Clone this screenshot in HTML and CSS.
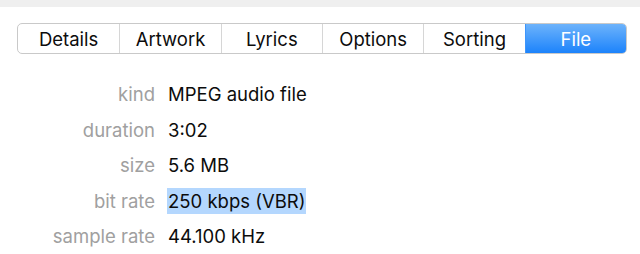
FILE: index.html
```html
<!DOCTYPE html>
<html lang="en">
<head>
    <meta charset="UTF-8">
    <title>File Info</title>
    <link rel="stylesheet" href="styles.css">
</head>
<body>
    <div class="topbar"></div>

    <div class="tabs">
        <div class="tab">Details</div>
        <div class="tab">Artwork</div>
        <div class="tab">Lyrics</div>
        <div class="tab">Options</div>
        <div class="tab">Sorting</div>
        <div class="tab active">File</div>
    </div>

    <div class="info">
        <div class="label">kind</div>
        <div class="value">MPEG audio file</div>
        <div class="label">duration</div>
        <div class="value">3:02</div>
        <div class="label">size</div>
        <div class="value">5.6 MB</div>
        <div class="label">bit rate</div>
        <div class="value"><span class="selected">250 kbps (VBR)</span></div>
        <div class="label">sample rate</div>
        <div class="value">44.100 kHz</div>
    </div>
</body>
</html>
```

FILE: styles.css
```css
:root {
    --bar-bg: #efefef;
    --border: #c9c9c9;
    --label: #a0a0a0;
    --text: #0c0c0c;
    --selection: #b4d7fe;
}

body {
    font-family: 'Inter', 'Liberation Sans', sans-serif;
    margin: 0;
    background: #ffffff;
    color: var(--text);
    width: 640px;
    height: 254px;
    overflow: hidden;
}

.topbar {
    height: 7px;
    background: var(--bar-bg);
}

.tabs {
    display: grid;
    grid-template-columns: repeat(6, 1fr);
    width: 608px;
    height: 29px;
    margin: 16px 0 0 17px;
    border: 1px solid var(--border);
    border-radius: 5px;
    overflow: hidden;
}

.tab {
    display: flex;
    align-items: center;
    justify-content: center;
    font-size: 18.5px;
    border-left: 1px solid #d6d6d6;
}

.tab:first-child {
    border-left: none;
}

.tab.active {
    background: linear-gradient(#6db3fb, #1c83fb);
    color: #ffffff;
    border-left-color: #3d95fb;
}

.info {
    display: grid;
    grid-template-columns: 155px auto;
    column-gap: 13px;
    margin-top: 23px;
    font-size: 18.5px;
    line-height: 35.5px;
}

.label {
    text-align: right;
    color: var(--label);
}

.selected {
    background: var(--selection);
    padding: 2px 1px;
    margin-left: -1px;
}
```
